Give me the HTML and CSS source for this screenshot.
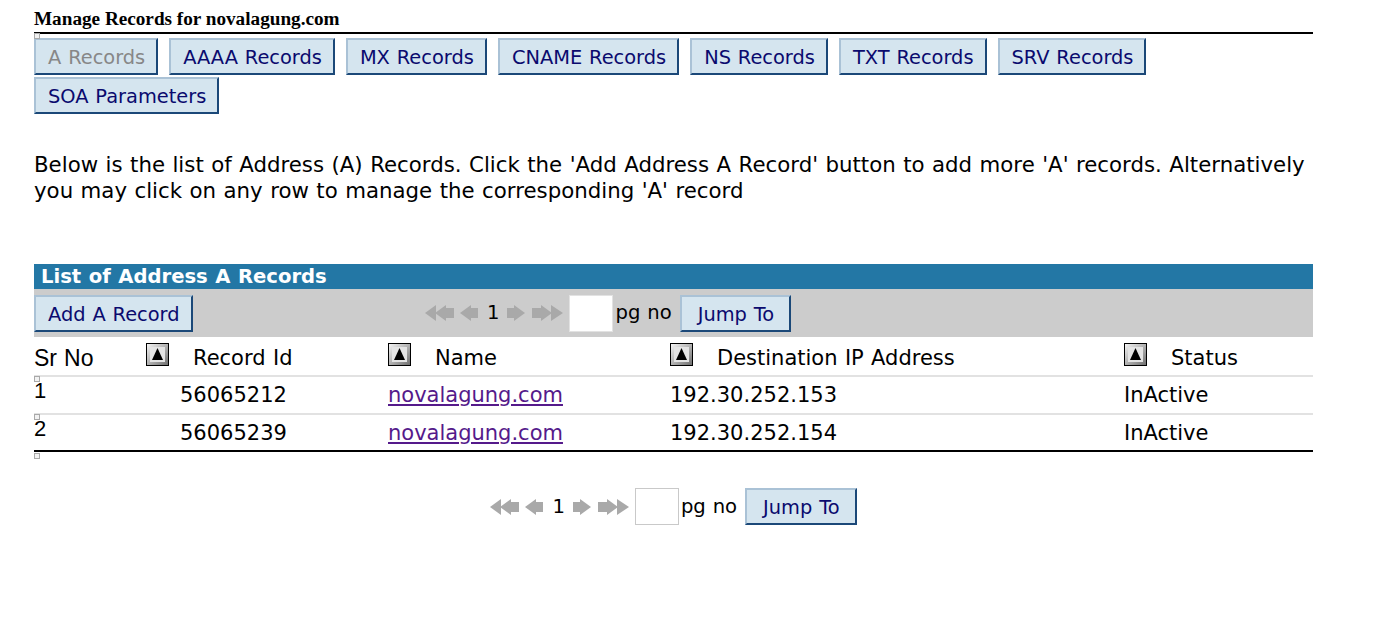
FILE: index.html
```html
<!DOCTYPE html>
<html>
<head>
<meta charset="utf-8">
<title>Manage Records</title>
<link rel="stylesheet" href="styles.css">
</head>
<body>
<div class="page">
  <h1 class="title">Manage Records for novalagung.com</h1>
  <div class="icon-line"><span class="broken"></span></div>
  <div class="tabs">
    <button class="btn disabled">A Records</button>
    <button class="btn">AAAA Records</button>
    <button class="btn">MX Records</button>
    <button class="btn">CNAME Records</button>
    <button class="btn">NS Records</button>
    <button class="btn">TXT Records</button>
    <button class="btn">SRV Records</button>
    <button class="btn">SOA Parameters</button>
  </div>

  <p class="intro">Below is the list of Address (A) Records. Click the 'Add Address A Record' button to add more 'A' records. Alternatively you may click on any row to manage the corresponding 'A' record</p>

  <div class="records">
    <div class="bar-title">List of Address A Records</div>
    <div class="toolbar">
      <div><button class="btn">Add A Record</button></div>
      <div class="pager">
        <svg class="arr dbl" width="29" height="18" viewBox="0 0 29 18"><polygon points="0,9 11,1 11,17" fill="#a9a9a9"/><polygon points="10,9 21,1 21,4 29,4 29,14 21,14 21,17" fill="#a9a9a9"/></svg>
        <svg class="arr sgl" width="18" height="18" viewBox="0 0 18 18"><polygon points="0,9 11,1 11,4 18,4 18,14 11,14 11,17" fill="#a9a9a9"/></svg>
        <span class="pnum">1</span>
        <svg class="arr sgl" width="18" height="18" viewBox="0 0 18 18"><polygon points="18,9 7,1 7,4 0,4 0,14 7,14 7,17" fill="#a9a9a9"/></svg>
        <svg class="arr dbl2" width="31" height="18" viewBox="0 0 31 18"><polygon points="0,4 9,4 9,1 20,9 9,17 9,14 0,14" fill="#a9a9a9"/><polygon points="19,1 31,9 19,17" fill="#a9a9a9"/></svg>
        <span class="pg-input"></span>
        <span class="pg-label">pg no</span>
        <button class="btn jump">Jump To</button>
      </div>
    </div>

    <div class="grid head">
      <div class="cell c1"><span>Sr No</span></div>
      <div class="cell"><svg class="sort" width="23" height="23" viewBox="0 0 23 23"><defs><linearGradient id="sg" x1="0" y1="0" x2="1" y2="1"><stop offset="0" stop-color="#f4f4f4"/><stop offset="1" stop-color="#6f6f6f"/></linearGradient></defs><rect x="0" y="0" width="23" height="23" fill="#000"/><rect x="1" y="1" width="21" height="21" fill="url(#sg)"/><rect x="4" y="4" width="15" height="15" fill="#e4e4e4"/><polygon points="11.5,5 6,17 17,17" fill="#000"/></svg><span>Record Id</span></div>
      <div class="cell"><svg class="sort" width="23" height="23" viewBox="0 0 23 23"><rect x="0" y="0" width="23" height="23" fill="#000"/><rect x="1" y="1" width="21" height="21" fill="url(#sg)"/><rect x="4" y="4" width="15" height="15" fill="#e4e4e4"/><polygon points="11.5,5 6,17 17,17" fill="#000"/></svg><span>Name</span></div>
      <div class="cell"><svg class="sort" width="23" height="23" viewBox="0 0 23 23"><rect x="0" y="0" width="23" height="23" fill="#000"/><rect x="1" y="1" width="21" height="21" fill="url(#sg)"/><rect x="4" y="4" width="15" height="15" fill="#e4e4e4"/><polygon points="11.5,5 6,17 17,17" fill="#000"/></svg><span>Destination IP Address</span></div>
      <div class="cell"><svg class="sort" width="23" height="23" viewBox="0 0 23 23"><rect x="0" y="0" width="23" height="23" fill="#000"/><rect x="1" y="1" width="21" height="21" fill="url(#sg)"/><rect x="4" y="4" width="15" height="15" fill="#e4e4e4"/><polygon points="11.5,5 6,17 17,17" fill="#000"/></svg><span>Status</span></div>
    </div>

    <div class="grid row">
      <div class="cell c1"><div class="icon-line"><span class="broken"></span></div><span class="srno">1</span></div>
      <div class="cell c2">56065212</div>
      <div class="cell"><a href="#">novalagung.com</a></div>
      <div class="cell">192.30.252.153</div>
      <div class="cell">InActive</div>
    </div>
    <div class="grid row last">
      <div class="cell c1"><div class="icon-line"><span class="broken"></span></div><span class="srno">2</span></div>
      <div class="cell c2">56065239</div>
      <div class="cell"><a href="#">novalagung.com</a></div>
      <div class="cell">192.30.252.154</div>
      <div class="cell">InActive</div>
    </div>
    <div class="icon-line after"><span class="broken"></span></div>
  </div>

  <div class="pager bottom">
    <svg class="arr dbl" width="29" height="18" viewBox="0 0 29 18"><polygon points="0,9 11,1 11,17" fill="#a9a9a9"/><polygon points="10,9 21,1 21,4 29,4 29,14 21,14 21,17" fill="#a9a9a9"/></svg>
    <svg class="arr sgl" width="18" height="18" viewBox="0 0 18 18"><polygon points="0,9 11,1 11,4 18,4 18,14 11,14 11,17" fill="#a9a9a9"/></svg>
    <span class="pnum">1</span>
    <svg class="arr sgl" width="18" height="18" viewBox="0 0 18 18"><polygon points="18,9 7,1 7,4 0,4 0,14 7,14 7,17" fill="#a9a9a9"/></svg>
    <svg class="arr dbl2" width="31" height="18" viewBox="0 0 31 18"><polygon points="0,4 9,4 9,1 20,9 9,17 9,14 0,14" fill="#a9a9a9"/><polygon points="19,1 31,9 19,17" fill="#a9a9a9"/></svg>
    <span class="pg-input"></span>
    <span class="pg-label">pg no</span>
    <button class="btn jump">Jump To</button>
  </div>
</div>
</body>
</html>
```

FILE: styles.css
```css
* { box-sizing: border-box; }

body {
  margin: 0;
  background: #fff;
  color: #000;
  font-family: "DejaVu Sans", Verdana, sans-serif;
  word-spacing: 0.7px;
}

.page {
  width: 1279px;
  margin-left: 34px;
}

.title {
  margin: 8px 0 0;
  padding-bottom: 2px;
  border-bottom: 2px solid #000;
  font: bold 19.2px/22px "Liberation Serif", "Times New Roman", serif;
  word-spacing: 0;
}

.icon-line {
  height: 4px;
  overflow: visible;
}

.broken {
  display: block;
  width: 6px;
  height: 6px;
  border: 1px solid #a9a9a9;
  background: #f2f2f2;
  position: relative;
  top: -1px;
}

.tabs {
  display: flex;
  flex-wrap: wrap;
  column-gap: 11px;
  row-gap: 2px;
}

.btn {
  height: 37px;
  margin: 0;
  padding: 3px 11px 0 12px;
  background: #d5e5ef;
  border: 2px solid;
  border-color: #aac2d6 #1b4878 #1b4878 #aac2d6;
  border-radius: 0;
  color: #0a0a6e;
  font: 19.4px/30px "DejaVu Sans", Verdana, sans-serif;
  word-spacing: 0.7px;
  white-space: nowrap;
}

.btn.disabled {
  color: #878787;
}

.intro {
  margin: 38px 0 0;
  font-size: 21.3px;
  line-height: 26px;
}

.records {
  margin-top: 60px;
}

.bar-title {
  height: 25px;
  padding-left: 7px;
  background: #2377a5;
  color: #fff;
  font-weight: bold;
  font-size: 19.6px;
  line-height: 25px;
}

.toolbar {
  height: 48px;
  background: #cccccc;
  display: grid;
  grid-template-columns: 391px 1fr;
  align-items: center;
}

.pager {
  display: flex;
  align-items: center;
  font-size: 19.6px;
}

.pager .dbl { margin-right: 6px; }
.pager .pnum { margin: 0 8px 0 9px; line-height: 26px; }
.pager .dbl2 { margin-left: 7px; }

.pg-input {
  width: 44px;
  height: 37px;
  margin-left: 6px;
  background: #fff;
  border: 1px solid #e2e2e2;
}

.pager.bottom .pg-input {
  border-color: #c9c9c9;
}

.pg-label {
  margin-left: 2px;
  line-height: 26px;
}

.jump {
  margin-left: 8px;
  padding: 3px 15px 0 16px;
}

.grid {
  display: grid;
  grid-template-columns: 112px 242px 282px 454px 189px;
}

.cell {
  font-size: 21px;
  line-height: 26px;
}

.head {
  height: 40px;
  border-bottom: 2px solid #e2e2e2;
}

.head .cell {
  display: flex;
  align-items: center;
}

.head .cell span {
  padding-top: 4px;
}

.sort {
  flex: none;
  margin-right: 24px;
  margin-bottom: 3px;
}

.c1 {
  font-family: "Liberation Sans", Arial, sans-serif;
}

.head .c1 {
  font-size: 23px;
}

.row {
  height: 38px;
  border-bottom: 2px solid #e2e2e2;
}

.row.last {
  height: 37px;
  border-bottom-color: #000;
}

.row .cell {
  padding-top: 5px;
}

.row .cell.c1 {
  padding-top: 0;
  font-size: 22px;
}

.srno {
  display: block;
  line-height: 20px;
}

.row .c2 {
  padding-left: 34px;
}

.cell a {
  color: #551a8b;
  text-decoration: underline;
}

.icon-line.after {
  height: 6px;
  padding-top: 2px;
}

.pager.bottom {
  justify-content: center;
  margin-top: 30px;
}
```
